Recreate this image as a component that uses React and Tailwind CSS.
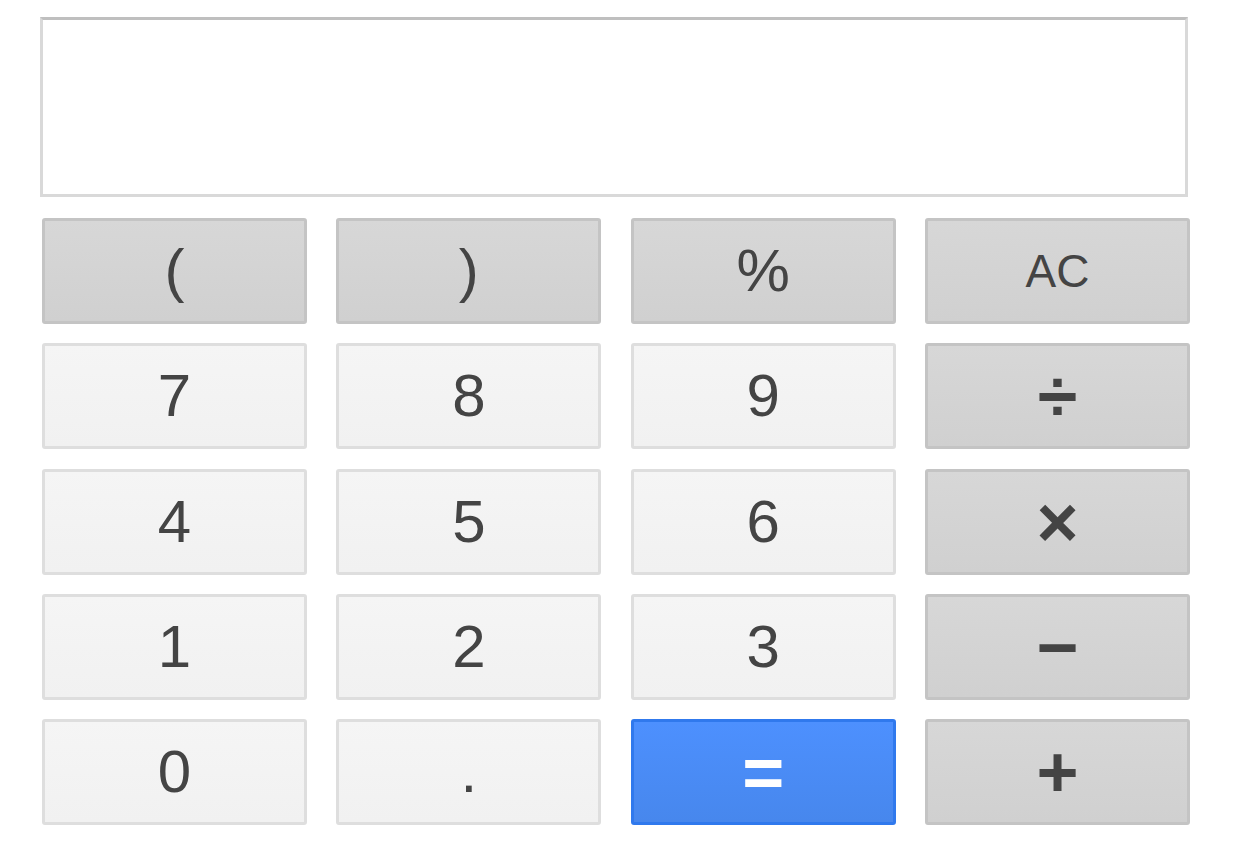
import React from "react";

const keys = [
  { label: "(", kind: "op" },
  { label: ")", kind: "op" },
  { label: "%", kind: "op" },
  { label: "AC", kind: "op", small: true },
  { label: "7", kind: "num" },
  { label: "8", kind: "num" },
  { label: "9", kind: "num" },
  { label: "÷", kind: "op", bold: true },
  { label: "4", kind: "num" },
  { label: "5", kind: "num" },
  { label: "6", kind: "num" },
  { label: "×", kind: "op", bold: true },
  { label: "1", kind: "num" },
  { label: "2", kind: "num" },
  { label: "3", kind: "num" },
  { label: "−", kind: "op", bold: true },
  { label: "0", kind: "num" },
  { label: ".", kind: "num" },
  { label: "=", kind: "eq", bold: true },
  { label: "+", kind: "op", bold: true },
];

const styles = {
  op: "bg-gradient-to-b from-[#d7d7d7] to-[#d0d0d0] border-[#c4c4c4] text-[#444]",
  num: "bg-gradient-to-b from-[#f5f5f5] to-[#f1f1f1] border-[#dedede] text-[#444]",
  eq: "bg-gradient-to-b from-[#4d90fe] to-[#4787ed] border-[#3079ed] text-white",
};

const App = () => {
  return (
    <div className="min-h-screen bg-white pl-[40px] pt-[17px] font-['Liberation_Sans',Arial,sans-serif]">
      {/* Display */}
      <div className="w-[1148px] h-[180px] bg-white border-[3px] border-[#d9d9d9] border-t-[#bfbfbf]"></div>

      {/* Keypad */}
      <div className="grid grid-cols-4 gap-x-[29.33px] gap-y-[19.25px] w-[1148px] mt-[21px] ml-[2px]">
        {keys.map((k, i) => (
          <button
            key={i}
            className={`h-[106px] rounded-[3px] border-[3px] flex items-center justify-center leading-none ${styles[k.kind]} ${
              k.small ? "text-[46px] font-normal" : k.bold ? "text-[72px] font-bold" : "text-[60px] font-normal"
            }`}
          >
            {k.label}
          </button>
        ))}
      </div>
    </div>
  );
};

export default App;
